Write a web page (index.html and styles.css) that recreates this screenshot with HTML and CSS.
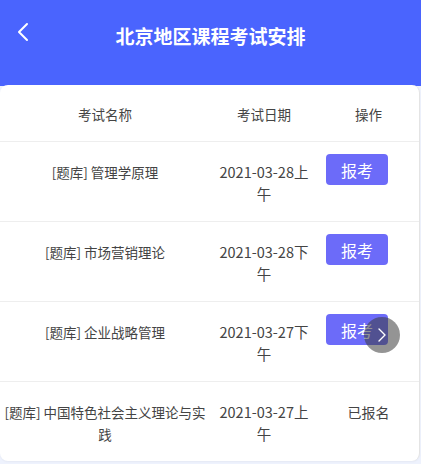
FILE: index.html
```html
<!DOCTYPE html>
<html lang="zh-CN">
  <head>
    <meta charset="UTF-8" />
    <meta name="viewport" content="width=device-width, initial-scale=1.0" />
    <title>北京地区课程考试安排</title>
    <link rel="stylesheet" href="styles.css">
  </head>
  <body>
    <header class="top-bar">
      <a href="#" class="back-link" aria-label="返回">
        <svg width="14" height="20" viewBox="0 0 14 20"><path d="M11 2 L3 10 L11 18" fill="none" stroke="#fff" stroke-width="2" stroke-linecap="round" stroke-linejoin="round"/></svg>
      </a>
      <h1>北京地区课程考试安排</h1>
    </header>
    <main class="exam-card">
      <div class="exam-row exam-head">
        <div class="col-name">考试名称</div>
        <div class="col-date">考试日期</div>
        <div class="col-op">操作</div>
      </div>
      <div class="exam-row">
        <div class="col-name">[题库] 管理学原理</div>
        <div class="col-date">2021-03-28上午</div>
        <div class="col-op has-btn"><button class="apply-btn">报考</button></div>
      </div>
      <div class="exam-row">
        <div class="col-name">[题库] 市场营销理论</div>
        <div class="col-date">2021-03-28下午</div>
        <div class="col-op has-btn"><button class="apply-btn">报考</button></div>
      </div>
      <div class="exam-row">
        <div class="col-name">[题库] 企业战略管理</div>
        <div class="col-date">2021-03-27下午</div>
        <div class="col-op has-btn"><button class="apply-btn">报考</button></div>
      </div>
      <div class="exam-row">
        <div class="col-name">[题库] 中国特色社会主义理论与实践</div>
        <div class="col-date">2021-03-27上午</div>
        <div class="col-op done">已报名</div>
      </div>
      <!-- floating next button -->
      <a href="#" class="float-next" aria-label="下一页">
        <svg width="10" height="16" viewBox="0 0 10 16"><path d="M2 2 L8 8 L2 14" fill="none" stroke="#fff" stroke-width="1.4" stroke-linecap="round" stroke-linejoin="round"/></svg>
      </a>
    </main>
  </body>
</html>
```

FILE: styles.css
```css
:root {
  --brand-blue: #4a64fe;
  --btn-purple: #6c6bf9;
  --page-bg: #eef2fd;
  --line: #eeeeee;
  --text: #333;
}
* { box-sizing: border-box; margin: 0; padding: 0; }
html, body { height: 100%; }
body { background: var(--page-bg); font-family: "Noto Sans CJK SC", "Noto Sans", sans-serif; color: var(--text); font-size: 14px; }

.top-bar { background: var(--brand-blue); height: 86px; display: flex; align-items: flex-start; justify-content: center; position: relative; padding-top: 22px; }
.top-bar h1 { color: #fff; font-size: 19px; font-weight: 700; line-height: 28px; }
.back-link { position: absolute; left: 16px; top: 22px; display: flex; }

.exam-card { background: #fff; margin-top: -1px; width: 420px; border-radius: 8px; border-right: 1px solid #e4e4e4; position: relative; box-shadow: 0 1px 2px rgba(0, 0, 0, 0.04); }
.exam-row { display: grid; grid-template-columns: 210px 108px 1fr; border-bottom: 1px solid var(--line); height: 80px; padding-top: 19px; text-align: center; line-height: 22px; }
.exam-row:last-of-type { border-bottom: none; height: 79px; }
.exam-head { height: 57px; padding-top: 18px; color: #444; font-size: 13.5px; }
.col-name { padding: 0 4px; font-size: 13.5px; color: #444; }
.col-date { padding: 0 6px; font-size: 14.5px; color: #444; }
.col-op { display: flex; justify-content: center; align-items: flex-start; }
.col-op.has-btn { justify-content: flex-start; padding-left: 8px; }
.exam-head .col-date, .exam-head .col-op { font-size: 13.5px; }
.col-op.done { font-size: 14px; color: #444; }

.apply-btn { width: 62px; height: 31px; margin-top: -7px; background: var(--btn-purple); color: #fff; border: none; border-radius: 4px; font-family: inherit; font-size: 16px; cursor: pointer; }

.float-next { position: absolute; left: 364px; top: 232px; width: 36px; height: 36px; border-radius: 50%; background: rgba(60, 60, 60, 0.55); display: flex; align-items: center; justify-content: center; }
```
